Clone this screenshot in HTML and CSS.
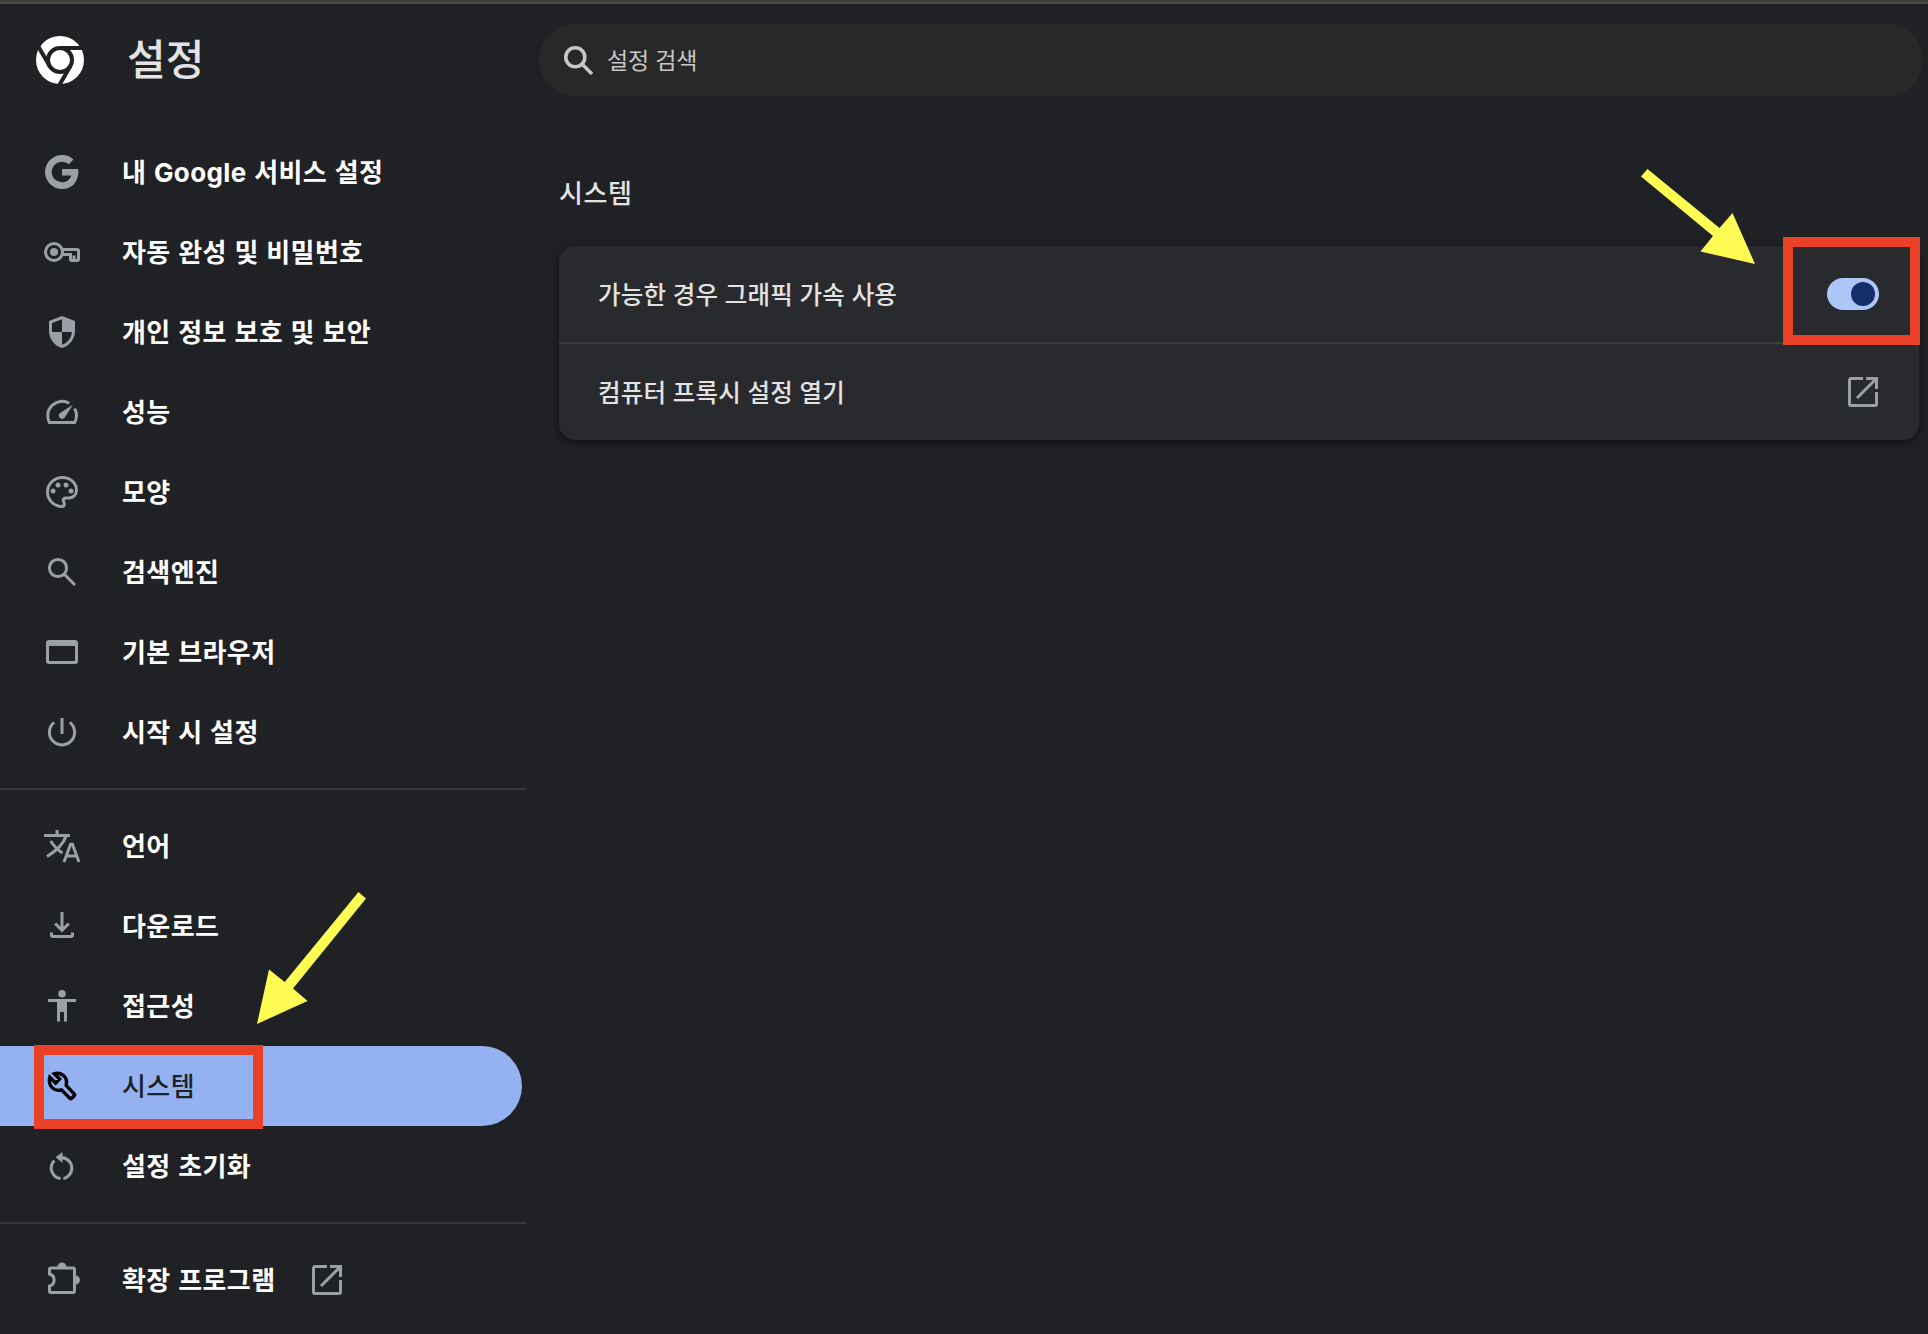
FILE: index.html
```
<!DOCTYPE html>
<html lang="ko">
<head>
    <meta charset="UTF-8">
    <meta name="viewport" content="width=device-width, initial-scale=1.0">
    <title>설정 - 시스템</title>
    <link rel="stylesheet" href="styles.css">
</head>
<body>
    <header class="toolbar">
        <div class="brand">
            <svg class="logo" viewBox="0 0 48 48">
                <circle cx="24" cy="24" r="24" fill="#fff"/>
                <g fill="none" stroke="#202124" stroke-width="4">
                    <circle cx="24" cy="24" r="12"/>
                    <path d="M24 12H48"/>
                    <path d="M24 12H48" transform="rotate(120 24 24)"/>
                    <path d="M24 12H48" transform="rotate(240 24 24)"/>
                </g>
            </svg>
            <h1>설정</h1>
        </div>
        <div class="search">
            <svg class="search-icon" viewBox="0 0 28 28">
                <circle cx="10.9" cy="10.9" r="9.2"/>
                <path d="M17.5 17.5L27 27"/>
            </svg>
            <span>설정 검색</span>
        </div>
    </header>

    <div class="container">
        <nav class="sidebar">
            <a class="item">
                <svg class="icon solid" viewBox="0 0 40 40"><path transform="translate(-1.3 -.4) scale(1.7)" d="M12.545 10.239v3.821h5.445c-.712 2.315-2.647 3.972-5.445 3.972a6.033 6.033 0 1 1 0-12.064c1.498 0 2.866.549 3.921 1.453l2.814-2.814A9.969 9.969 0 0 0 12.545 2C7.021 2 2.543 6.477 2.543 12s4.478 10 10.002 10c8.396 0 10.249-7.85 9.426-11.748z"/></svg>
                <span>내 Google 서비스 설정</span>
            </a>
            <a class="item">
                <svg class="icon" viewBox="0 0 40 40"><circle cx="12" cy="20" r="8.5"/><circle class="dot" cx="12" cy="20" r="4"/><path d="M20 17.5H35a1.5 1.5 0 0 1 1.5 1.5V27a1.5 1.5 0 0 1-1.5 1.5H30a1.5 1.5 0 0 1-1.5-1.5V22.5H20M32 23.5V27.5"/></svg>
                <span>자동 완성 및 비밀번호</span>
            </a>
            <a class="item">
                <svg class="icon solid" viewBox="0 0 40 40"><path fill-rule="evenodd" d="M20 4L33 9V19C33 27 27.5 34 20 36C12.5 34 7 27 7 19V9ZM20 7.3L10 11V20H20ZM20 20V32.8C25.5 31 29.4 26 29.9 20Z"/></svg>
                <span>개인 정보 보호 및 보안</span>
            </a>
            <a class="item">
                <svg class="icon" viewBox="0 0 40 40"><path d="M27.3 11.2A14.5 14.5 0 0 0 7.3 30.5H32.7A14.5 14.5 0 0 0 32.6 16.6"/><path class="dot" d="M31 12.5L22.8 25.6A3.3 3.3 0 1 1 17.8 21.3Z"/></svg>
                <span>성능</span>
            </a>
            <a class="item">
                <svg class="icon" viewBox="0 0 40 40"><path d="M20 34.5C12 34.5 5.5 28 5.5 20S12 5.5 20.3 5.5C28.2 5.5 34.5 11 34.5 18.3C34.5 23 31 26 26.8 26H24C22.5 26 21.3 27 21.3 28.4C21.3 29.6 22.3 30.3 22.3 32C22.3 33.5 21.5 34.5 20 34.5Z"/><g class="dot"><circle cx="11" cy="19" r="2.5"/><circle cx="16" cy="13" r="2.5"/><circle cx="24" cy="13" r="2.5"/><circle cx="29" cy="19" r="2.5"/></g></svg>
                <span>모양</span>
            </a>
            <a class="item">
                <svg class="icon" viewBox="0 0 40 40"><circle cx="16" cy="16" r="8.6"/><path d="M22 22L33 33"/></svg>
                <span>검색엔진</span>
            </a>
            <a class="item">
                <svg class="icon solid" viewBox="0 0 40 40"><path fill-rule="evenodd" d="M7 8H33a3 3 0 0 1 3 3V29a3 3 0 0 1-3 3H7a3 3 0 0 1-3-3V11a3 3 0 0 1 3-3ZM7 14V29H33V14Z"/></svg>
                <span>기본 브라우저</span>
            </a>
            <a class="item">
                <svg class="icon" viewBox="0 0 40 40"><path d="M20 6V22M12.2 10.4A12.6 12.6 0 1 0 27.8 10.4"/></svg>
                <span>시작 시 설정</span>
            </a>
            <div class="separator"></div>
            <a class="item">
                <svg class="icon" viewBox="0 0 40 40"><path d="M2 9.5H28M15 4V9.5M24 10C21.5 18 14 25 5 30.5M8.7 15C12 20 15 23.5 20.5 27M22 36L28.6 18.3H30.4L37 36M24.5 30H34.5"/></svg>
                <span>언어</span>
            </a>
            <a class="item">
                <svg class="icon" viewBox="0 0 40 40"><path d="M20 6V24M13.2 17.5L20 24.3L26.8 17.5M9.5 26.5V29A1.5 1.5 0 0 0 11 30.5H29A1.5 1.5 0 0 0 30.5 29V26.5"/></svg>
                <span>다운로드</span>
            </a>
            <a class="item">
                <svg class="icon solid" viewBox="0 0 40 40"><circle cx="20" cy="7.7" r="3.8"/><path d="M6 13H34V16H25V35.5H22V26H18V35.5H15V16H6Z"/></svg>
                <span>접근성</span>
            </a>
            <a class="item selected">
                <svg class="icon" viewBox="0 0 40 40"><path d="M7.8 11.2L13.6 17L17.6 13L12.2 7.8C18 6 26.5 10 24.2 19.4L32.2 27.8A1.5 1.5 0 0 1 32.2 29.8L29.8 32.2A1.5 1.5 0 0 1 27.8 32.2L19.6 23.9C12.5 26 5.5 20 7.8 11.2Z"/></svg>
                <span>시스템</span>
            </a>
            <a class="item">
                <svg class="icon" viewBox="0 0 40 40"><path d="M12.4 14.6A10.6 10.6 0 0 0 18.6 32.6M18 11.7A10.6 10.6 0 0 1 21.4 32.6"/><path class="dot" d="M13.5 11.3L20.5 6V17Z"/></svg>
                <span>설정 초기화</span>
            </a>
            <div class="separator"></div>
            <a class="item">
                <svg class="icon" viewBox="0 0 40 40"><path d="M9 8H31A1.5 1.5 0 0 1 32.5 9.5V31A1.5 1.5 0 0 1 31 32.5H9A1.5 1.5 0 0 1 7.5 31V26A6.2 6.2 0 0 0 7.5 14V9.5A1.5 1.5 0 0 1 9 8Z"/><path class="dot" d="M15.5 7A4.5 4.5 0 0 1 24.5 7ZM33.5 15.5A4.5 4.5 0 0 1 33.5 24.5Z"/></svg>
                <span>확장 프로그램</span>
                <svg class="external" viewBox="0 0 30 30"><path d="M15 1.5H3A1.5 1.5 0 0 0 1.5 3V27A1.5 1.5 0 0 0 3 28.5H27A1.5 1.5 0 0 0 28.5 27V15M18 1.5H28.5V12M9 21L28 2"/></svg>
            </a>
        </nav>

        <main class="content">
            <h2>시스템</h2>
            <div class="card">
                <div class="row">
                    <span>가능한 경우 그래픽 가속 사용</span>
                    <div class="toggle"><div class="knob"></div></div>
                </div>
                <div class="row">
                    <span>컴퓨터 프록시 설정 열기</span>
                    <svg class="external" viewBox="0 0 30 30"><path d="M15 1.5H3A1.5 1.5 0 0 0 1.5 3V27A1.5 1.5 0 0 0 3 28.5H27A1.5 1.5 0 0 0 28.5 27V15M18 1.5H28.5V12M9 21L28 2"/></svg>
                </div>
            </div>
        </main>
    </div>

    <!-- callouts over the page -->
    <div class="mark mark-menu"></div>
    <div class="mark mark-toggle"></div>
    <svg class="arrows" viewBox="0 0 1928 1334">
        <path d="M1647.5 169L1719.5 228L1732.5 213L1755 264L1700.5 251.5L1713 236L1641 176.5Z"/>
        <path d="M358.5 892L284.7 982L269 969.5L257 1024L307.5 1001L293 988.5L366 898.5Z"/>
    </svg>
</body>
</html>
```

FILE: styles.css
```
* {
    box-sizing: border-box;
}

body {
    position: relative;
    height: 1334px;
    margin: 0;
    border-top: 2px solid #3f413d;
    background-color: #202124;
    color: #e3e3e3;
    font-family: Inter, "Noto Sans CJK KR", sans-serif;
    font-size: 24px;
    overflow: hidden;
}

.toolbar {
    display: flex;
    align-items: center;
    height: 114px;
    padding: 0 5px 0 36px;
    border-top: 2px solid #4a4c4b;
}

.brand {
    display: flex;
    align-items: center;
    gap: 43px;
    width: 503px;
}

.logo {
    width: 48px;
    height: 48px;
}

h1 {
    margin: 0;
    font-size: 42px;
    font-weight: 500;
    line-height: 60px;
}

.search {
    display: flex;
    flex: 1;
    align-items: center;
    gap: 14px;
    height: 72px;
    padding-left: 25px;
    border-radius: 36px;
    background-color: #282828;
    color: #c7c7c7;
    font-size: 23px;
    letter-spacing: -0.2px;
}

.search span {
    padding-bottom: 2px;
}

.search-icon {
    width: 29px;
    height: 29px;
    fill: none;
    stroke: #c7c7c7;
    stroke-width: 3.4;
}

.container {
    display: flex;
}

.sidebar {
    width: 526px;
    padding-top: 16px;
}

.item {
    display: flex;
    align-items: center;
    width: 522px;
    height: 80px;
    padding-left: 42px;
    color: #fff;
    font-size: 26px;
    font-weight: 700;
    letter-spacing: 0.4px;
    word-spacing: 1px;
}

.item span {
    margin-left: 40px;
    padding-bottom: 4px;
}

.icon {
    width: 40px;
    height: 40px;
    fill: none;
    stroke: #9aa0a6;
    stroke-width: 3;
}

.icon.solid,
.icon .dot {
    fill: #9aa0a6;
    stroke: none;
}

.selected {
    border-radius: 0 40px 40px 0;
    background-color: #94b2f2;
    color: #202124;
    font-weight: 500;
}

.selected .icon {
    stroke: #000;
    stroke-width: 3.4;
}

.separator {
    height: 2px;
    margin: 16px 0;
    background-color: #38383b;
}

.external {
    width: 30px;
    height: 30px;
    fill: none;
    stroke: #9aa0a6;
    stroke-width: 3;
}

.item .external {
    margin-left: 37px;
}

.content {
    flex: 1;
    padding: 58px 9px 0 33px;
}

h2 {
    margin: 0 0 32px;
    font-size: 26px;
    font-weight: 500;
    line-height: 40px;
    letter-spacing: 0.6px;
}

.card {
    border-radius: 16px;
    background-color: #292a2d;
    box-shadow: 0 2px 4px rgba(0, 0, 0, 0.3), 0 4px 12px rgba(0, 0, 0, 0.2);
}

.row {
    display: flex;
    align-items: center;
    justify-content: space-between;
    height: 96px;
    padding: 0 41px 0 39px;
    font-size: 24.5px;
    font-weight: 500;
    letter-spacing: 0.15px;
}

.row span {
    padding-bottom: 2px;
}

.row + .row {
    height: 98px;
    border-top: 2px solid #3d3e41;
}

.toggle {
    display: flex;
    justify-content: flex-end;
    width: 52px;
    height: 32px;
    margin-right: -1px;
    padding: 4px;
    border-radius: 16px;
    background-color: #adc6f7;
}

.knob {
    width: 24px;
    height: 24px;
    border-radius: 50%;
    background-color: #132e6b;
}

.mark {
    position: absolute;
    border: 10px solid #ea4025;
}

.mark-menu {
    top: 1043px;
    left: 34px;
    width: 229px;
    height: 84px;
}

.mark-toggle {
    top: 235px;
    left: 1783px;
    width: 137px;
    height: 108px;
}

.arrows {
    position: absolute;
    top: -2px;
    left: 0;
    width: 1928px;
    height: 1334px;
    fill: #fffd54;
}
```
